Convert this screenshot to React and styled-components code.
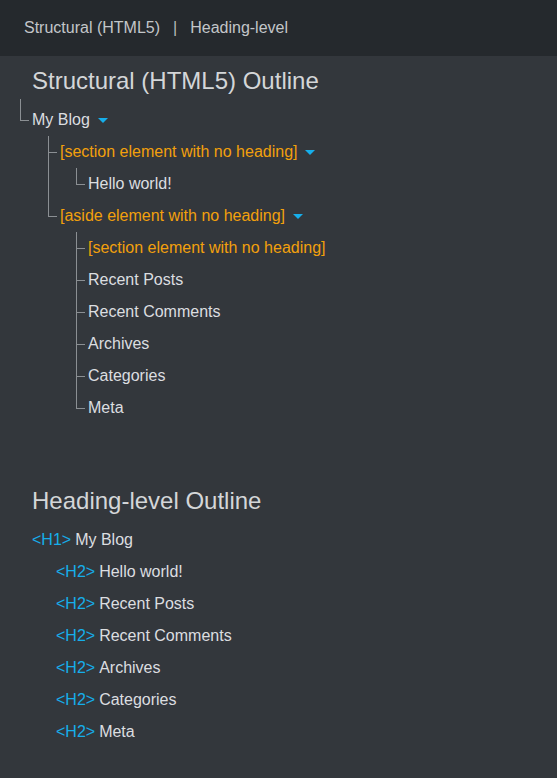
import React from "react";
import styled, { createGlobalStyle } from "styled-components";

const GlobalStyle = createGlobalStyle`
  html, body {
    margin: 0;
    padding: 0;
    background: #33373c;
    min-height: 100%;
  }
  body {
    font-family: "Liberation Sans", Arial, Helvetica, sans-serif;
    color: #d9dbdd;
  }
`;

const Page = styled.div`
  min-height: 100vh;
  background: #33373c;
`;

const TopBar = styled.nav`
  height: 56px;
  background: #25292d;
  display: flex;
  align-items: center;
  padding-left: 24px;
  gap: 13px;
  font-size: 16px;
  color: #c3c6c9;
`;

const NavLink = styled.a`
  color: inherit;
  text-decoration: none;
  cursor: pointer;
`;

const Divider = styled.span`
  color: #b8bbbe;
`;

const Content = styled.main`
  padding: 10px 32px 40px;
`;

const Title = styled.h2`
  margin: 0;
  font-size: 24px;
  font-weight: normal;
  line-height: 30px;
  color: #d4d6d8;
`;

const Tree = styled.ul`
  list-style: none;
  margin: 8px 0 0 -12px;
  padding: 0;
`;

const Branch = styled.ul`
  list-style: none;
  margin: 0 0 0 16px;
  padding: 0;
`;

const Node = styled.li`
  position: relative;
  padding-left: 12px;

  &::before {
    content: "";
    position: absolute;
    left: 0;
    top: ${(p) => (p.$root ? "-5px" : "0")};
    height: ${(p) => (p.$root ? "21px" : "16px")};
    width: 8px;
    border-left: 1px solid #8b8f93;
    border-bottom: 1px solid #8b8f93;
  }

  &:not(:last-child)::after {
    content: "";
    position: absolute;
    left: 0;
    top: 16px;
    bottom: 0;
    border-left: 1px solid #8b8f93;
  }
`;

const Row = styled.div`
  height: 32px;
  display: flex;
  align-items: center;
  font-size: 16px;
  white-space: nowrap;
  color: ${(p) => (p.$untitled ? "#f2a00c" : "#dcdee0")};
`;

const Caret = styled.span`
  display: inline-block;
  width: 0;
  height: 0;
  margin-left: 8px;
  margin-top: 1px;
  border-left: 5px solid transparent;
  border-right: 5px solid transparent;
  border-top: 5px solid #16aeea;
`;

const Spacer = styled.div`
  height: 62px;
`;

const HeadingList = styled.ul`
  list-style: none;
  margin: 8px 0 0;
  padding: 0;
`;

const HeadingItem = styled.li`
  height: 32px;
  line-height: 32px;
  padding-left: ${(p) => (p.$level - 1) * 24}px;
  font-size: 16px;
  color: #dcdee0;
  white-space: nowrap;
`;

const Tag = styled.span`
  color: #16aeea;
  margin-right: 4px;
`;

const outline = {
  text: "My Blog",
  children: [
    {
      text: "[section element with no heading]",
      untitled: true,
      children: [{ text: "Hello world!" }],
    },
    {
      text: "[aside element with no heading]",
      untitled: true,
      children: [
        { text: "[section element with no heading]", untitled: true },
        { text: "Recent Posts" },
        { text: "Recent Comments" },
        { text: "Archives" },
        { text: "Categories" },
        { text: "Meta" },
      ],
    },
  ],
};

const headings = [
  { level: 1, text: "My Blog" },
  { level: 2, text: "Hello world!" },
  { level: 2, text: "Recent Posts" },
  { level: 2, text: "Recent Comments" },
  { level: 2, text: "Archives" },
  { level: 2, text: "Categories" },
  { level: 2, text: "Meta" },
];

function OutlineNode({ node, root }) {
  const hasChildren = node.children && node.children.length > 0;
  return (
    <Node $root={root}>
      <Row $untitled={node.untitled}>
        {node.text}
        {hasChildren && <Caret />}
      </Row>
      {hasChildren && (
        <Branch>
          {node.children.map((child, i) => (
            <OutlineNode key={i} node={child} />
          ))}
        </Branch>
      )}
    </Node>
  );
}

export default function App() {
  return (
    <Page>
      <GlobalStyle />
      <TopBar>
        <NavLink>Structural (HTML5)</NavLink>
        <Divider>|</Divider>
        <NavLink>Heading-level</NavLink>
      </TopBar>
      <Content>
        <Title>Structural (HTML5) Outline</Title>
        <Tree>
          <OutlineNode node={outline} root />
        </Tree>
        <Spacer />
        <Title>Heading-level Outline</Title>
        <HeadingList>
          {headings.map((h, i) => (
            <HeadingItem key={i} $level={h.level}>
              <Tag>{`<H${h.level}>`}</Tag>
              {h.text}
            </HeadingItem>
          ))}
        </HeadingList>
      </Content>
    </Page>
  );
}
